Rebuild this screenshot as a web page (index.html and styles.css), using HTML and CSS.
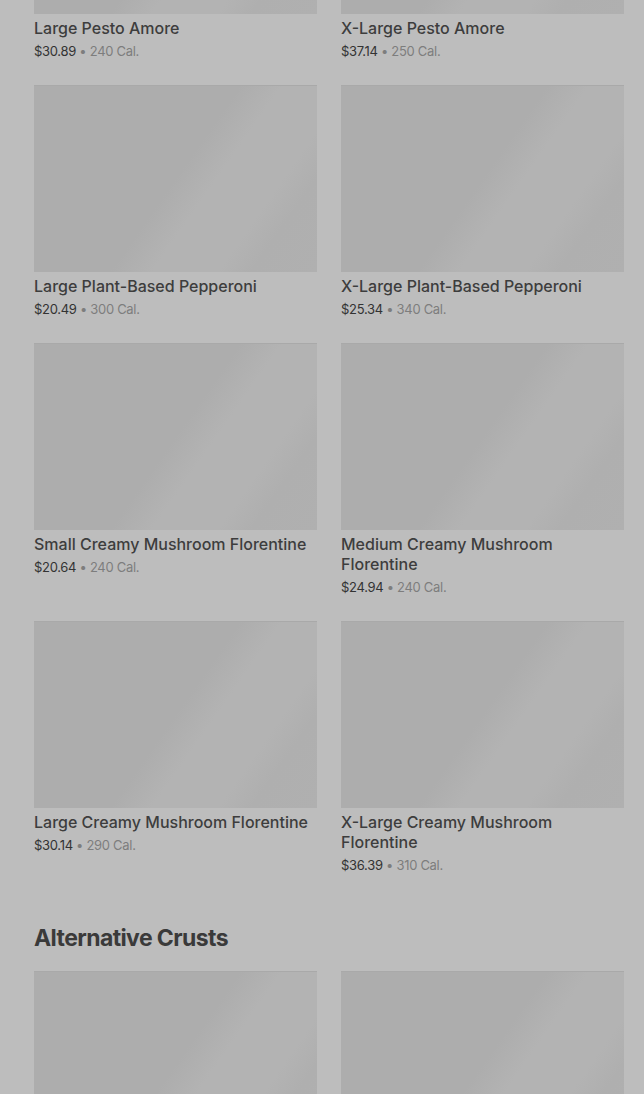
FILE: index.html
```html
<!DOCTYPE html>
<html lang="en">
<head>
<meta charset="UTF-8">
<meta name="viewport" content="width=device-width, initial-scale=1.0">
<title>Menu</title>
<link rel="stylesheet" href="styles.css">
</head>
<body>
<div class="menu">
    <div class="grid first">
        <div class="item">
            <div class="thumb"></div>
            <div class="name">Large Pesto Amore</div>
            <div class="meta"><span class="price">$30.89</span> • 240 Cal.</div>
        </div>
        <div class="item">
            <div class="thumb"></div>
            <div class="name">X-Large Pesto Amore</div>
            <div class="meta"><span class="price">$37.14</span> • 250 Cal.</div>
        </div>
        <div class="item">
            <div class="thumb"></div>
            <div class="name">Large Plant-Based Pepperoni</div>
            <div class="meta"><span class="price">$20.49</span> • 300 Cal.</div>
        </div>
        <div class="item">
            <div class="thumb"></div>
            <div class="name">X-Large Plant-Based Pepperoni</div>
            <div class="meta"><span class="price">$25.34</span> • 340 Cal.</div>
        </div>
        <div class="item">
            <div class="thumb"></div>
            <div class="name">Small Creamy Mushroom Florentine</div>
            <div class="meta"><span class="price">$20.64</span> • 240 Cal.</div>
        </div>
        <div class="item">
            <div class="thumb"></div>
            <div class="name">Medium Creamy Mushroom Florentine</div>
            <div class="meta"><span class="price">$24.94</span> • 240 Cal.</div>
        </div>
        <div class="item">
            <div class="thumb"></div>
            <div class="name">Large Creamy Mushroom Florentine</div>
            <div class="meta"><span class="price">$30.14</span> • 290 Cal.</div>
        </div>
        <div class="item">
            <div class="thumb"></div>
            <div class="name">X-Large Creamy Mushroom Florentine</div>
            <div class="meta"><span class="price">$36.39</span> • 310 Cal.</div>
        </div>
    </div>

    <h2 class="section-title">Alternative Crusts</h2>
    <div class="grid">
        <div class="item">
            <div class="thumb"></div>
        </div>
        <div class="item">
            <div class="thumb"></div>
        </div>
    </div>
</div>
</body>
</html>
```

FILE: styles.css
```css
body {
    font-family: Inter, 'Noto Sans', sans-serif;
    background-color: #bdbdbd;
    margin: 0;
    overflow: hidden;
}
.menu {
    padding: 0 20px 0 34px;
}
.grid {
    display: grid;
    grid-template-columns: 283px 283px;
    column-gap: 24px;
    row-gap: 24px;
}
.grid.first {
    margin-top: -173px;
}
.thumb {
    height: 187px;
    background: linear-gradient(125deg, #adadad 0%, #adadad 50%, #b3b3b3 60%, #b3b3b3 76%, #afafaf 84%, #b0b0b0 100%);
    border-top: 1px solid #a9a9a9;
    box-sizing: border-box;
}
.name {
    margin-top: 4px;
    font-size: 16px;
    line-height: 20px;
    font-weight: 500;
    color: #3d3d3d;
}
.meta {
    margin-top: 3px;
    font-size: 13px;
    line-height: 20px;
    color: #7d7d7d;
    letter-spacing: -0.3px;
}
.price {
    color: #333;
}
.section-title {
    margin: 47px 0 17px;
    font-size: 23px;
    line-height: 32px;
    font-weight: 700;
    color: #3a3a3a;
    letter-spacing: -0.6px;
}
```
